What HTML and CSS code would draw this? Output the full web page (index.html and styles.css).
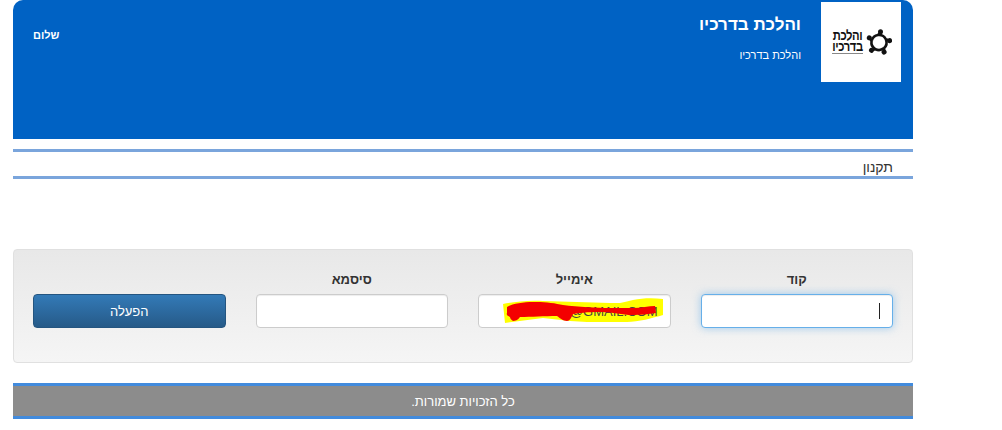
FILE: index.html
```html
<!DOCTYPE html>
<html lang="he" dir="rtl">
<head>
<meta charset="utf-8">
<title>והלכת בדרכיו</title>
<link rel="stylesheet" href="styles.css">
</head>
<body>
<div class="page">
  <header class="top">
    <div class="brand">
      <div class="logo">
        <svg class="logo-mark" viewBox="0 0 26 26" width="26" height="26" aria-hidden="true">
          <defs>
            <g id="arm">
              <circle cx="14.500" cy="2.800" r="2.500" fill="#111"/>
              <path d="M14.500 3L12 6A7.500 7.500 0 0 0 5.800 11.500" fill="none" stroke="#111" stroke-width="2.600"/>
            </g>
          </defs>
          <use href="#arm"/>
          <use href="#arm" transform="rotate(72 13 13.500)"/>
          <use href="#arm" transform="rotate(144 13 13.500)"/>
          <use href="#arm" transform="rotate(216 13 13.500)"/>
          <use href="#arm" transform="rotate(288 13 13.500)"/>
        </svg>
        <div class="logo-brand">
          <div class="logo-text">והלכת<br>בדרכיו</div>
          <i class="logo-line"></i>
        </div>
      </div>
      <div class="titles">
        <h1>והלכת בדרכיו</h1>
        <p>והלכת בדרכיו</p>
      </div>
    </div>
    <div class="hello">שלום</div>
  </header>

  <nav class="nav"><a href="#">תקנון</a></nav>

  <form class="panel">
    <div class="field">
      <label>קוד</label>
      <div class="input focus"><span class="caret"></span></div>
    </div>
    <div class="field">
      <label>אימייל</label>
      <div class="input">
        <svg class="scribble" viewBox="0 0 160 28" width="160" height="28" aria-hidden="true">
          <path d="M0 8C10 6 25 4 40 5L107 7 117 7C122 6 126 5 130 4 140 2 150 2 160 3L160 19C150 22 135 26 124 26L84 26 67 25 40 22 2 27Z" fill="#ffff00"/>
        </svg>
        <span class="email" dir="ltr">@GMAIL.COM</span>
        <svg class="scribble" viewBox="0 0 160 28" width="160" height="28" aria-hidden="true">
          <path d="M4 11C8 8 20 6 30 6 40 5.500 52 7 60 9 75 11 95 12 107 12L130 12C138 12 146 10 152 10L153 17C145 18 138 19 130 19 118 19 108 15.500 97 16 85 16 74 17 70 18 68 22 67 25 64 25 60 25 57 22 54 20 42 20 28 21 17 21 15 24 12 25 10 25 8 24 7 22 7 21 5 20 3 19 4 17Z" fill="#f40000"/>
        </svg>
      </div>
    </div>
    <div class="field">
      <label>סיסמא</label>
      <div class="input"></div>
    </div>
    <div class="field">
      <label class="blank">&nbsp;</label>
      <button type="button" class="btn">הפעלה</button>
    </div>
  </form>

  <footer class="foot">כל הזכויות שמורות.</footer>
</div>
</body>
</html>
```
FILE: styles.css
```css
* { box-sizing: border-box; }
html, body { margin: 0; padding: 0; background: #fff; }
body {
  font-family: "Liberation Sans", Arial, sans-serif;
  color: #333;
  height: 430px;
  overflow: hidden;
}
.page {
  width: 900px;
  margin-right: 89px;
}
.top {
  height: 139px;
  background: #0062c4;
  border-radius: 10px 10px 0 0;
  color: #fff;
  padding: 2px 12px 0 20px;
  display: flex;
  justify-content: space-between;
  align-items: flex-start;
}
.brand { display: flex; gap: 20px; }
.logo {
  width: 80px;
  height: 80px;
  background: #fff;
  color: #111;
  display: flex;
  align-items: center;
  gap: 3px;
  padding: 0 9px 0 12px;
}
.logo-brand { width: 31px; }
.logo-text {
  font-size: 14px;
  line-height: 11px;
  font-weight: bold;
  letter-spacing: -0.5px;
  text-align: center;
  white-space: nowrap;
  display: flex;
  justify-content: center;
  transform: scaleX(.8);
}
.logo-line {
  display: block;
  height: 1px;
  margin-top: 1px;
  background: #888;
}
.logo-mark { flex: none; }
.titles h1 {
  margin: 11px 0 0;
  font-size: 17px;
  line-height: 24px;
  font-weight: bold;
}
.titles p {
  margin: 10px 0 0;
  font-size: 11px;
  line-height: 16px;
}
.hello {
  margin-top: 25px;
  font-size: 11px;
  line-height: 16px;
  font-weight: bold;
}
.nav {
  margin-top: 10px;
  height: 30px;
  border-top: 3px solid #7aa5dc;
  border-bottom: 3px solid #7aa5dc;
  padding-right: 20px;
  font-size: 14px;
  line-height: 30px;
}
.nav a { color: #333; text-decoration: none; display: block; }
.panel {
  margin-top: 70px;
  height: 114px;
  background: linear-gradient(#e8e8e8, #f5f5f5);
  border: 1px solid #e0e0e0;
  border-radius: 4px;
  padding: 19px 19px 0 19px;
  display: grid;
  grid-template-columns: repeat(4, 1fr);
  column-gap: 30px;
  align-content: start;
}
.field { display: flex; flex-direction: column; }
.field label {
  height: 25px;
  font-size: 13px;
  line-height: 22px;
  font-weight: bold;
  text-align: center;
}
.input {
  position: relative;
  height: 34px;
  background: #fff;
  border: 1px solid #ccc;
  border-radius: 4px;
  box-shadow: inset 0 1px 1px rgba(0,0,0,.075);
}
.input.focus {
  border-color: #66afe9;
  box-shadow: inset 0 1px 1px rgba(0,0,0,.075), 0 0 8px rgba(102,175,233,.6);
}
.caret {
  position: absolute;
  top: 8px;
  right: 12px;
  width: 1px;
  height: 16px;
  background: #222;
}
.email {
  position: absolute;
  right: 12px;
  top: 9px;
  font-size: 13px;
  line-height: 16px;
  color: #444;
}
.scribble { position: absolute; left: 24px; top: 1px; }
.btn {
  height: 34px;
  width: 100%;
  margin: 0;
  padding: 1px 0 0;
  font: 13px/20px "Liberation Sans", Arial, sans-serif;
  color: #fff;
  background: linear-gradient(#337ab7, #265a88);
  border: 1px solid #245580;
  border-radius: 4px;
}
.foot {
  margin-top: 20px;
  height: 36px;
  background: #8c8c8c;
  border-top: 3px solid #428bdd;
  border-bottom: 3px solid #428bdd;
  color: #fff;
  font-size: 13px;
  line-height: 31px;
  text-align: center;
}
```
